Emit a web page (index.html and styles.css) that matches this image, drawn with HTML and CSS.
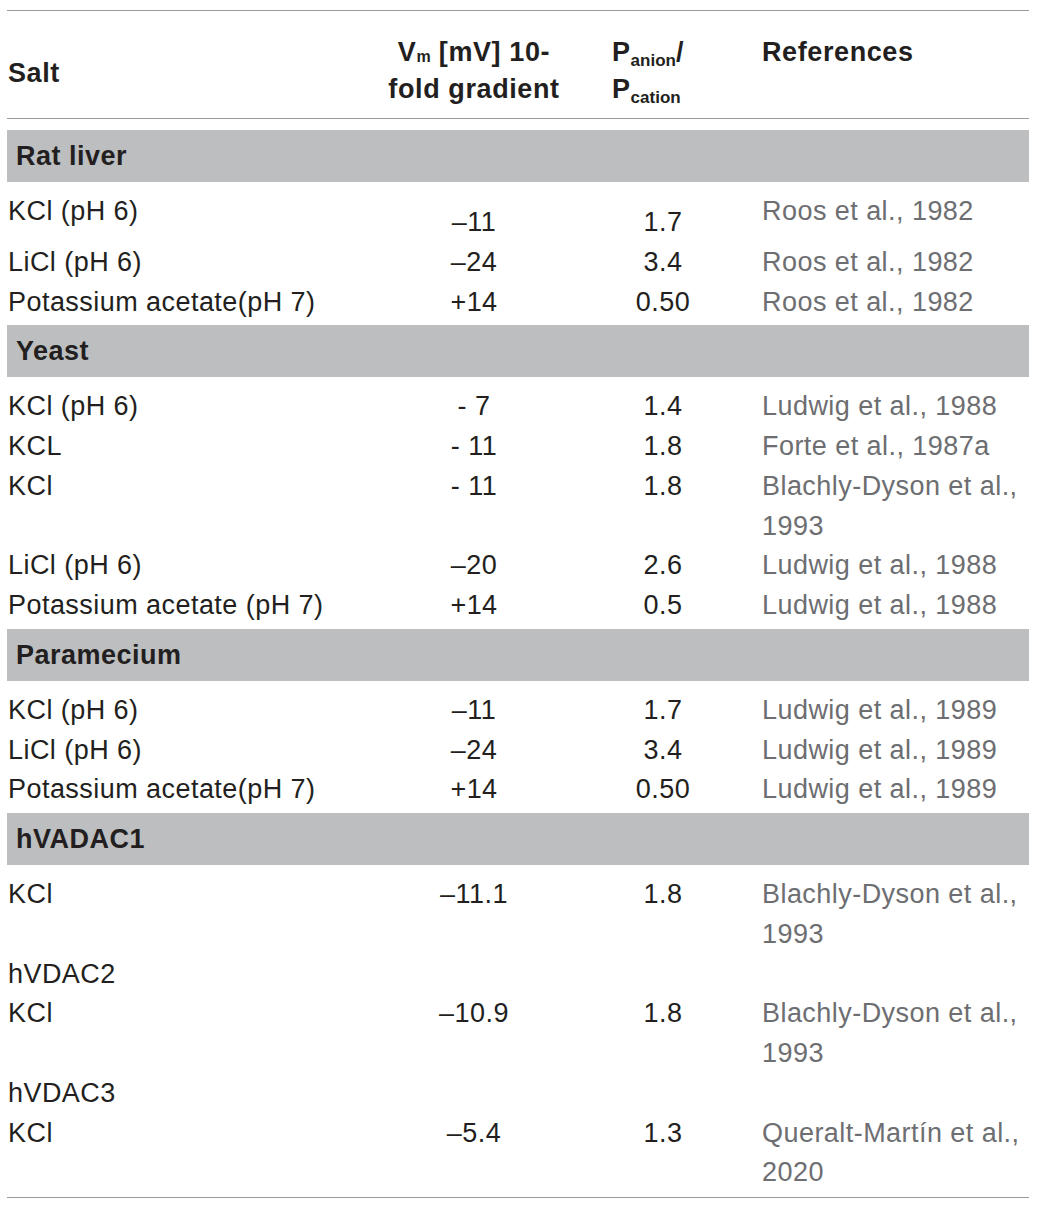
FILE: index.html
```html
<!DOCTYPE html>
<html lang="en">
<head>
<meta charset="utf-8">
<title>Salt permeability table</title>
<link rel="stylesheet" href="styles.css">
</head>
<body>
<table class="tbl">
  <colgroup>
    <col class="c1"><col class="c2"><col class="c3"><col class="c4">
  </colgroup>
  <thead>
    <tr>
      <th class="h-salt">Salt</th>
      <th class="h-vm">V<sub class="sb-m">m</sub> [mV] 10-<br>fold gradient</th>
      <th class="h-p">P<sub class="sb">anion</sub>/<br>P<sub class="sb">cation</sub></th>
      <th class="h-ref">References</th>
    </tr>
  </thead>
  <tbody>
    <tr class="sec first"><td colspan="4"><div class="bar">Rat liver</div></td></tr>
    <tr><td>KCl (pH 6)</td><td class="num low">–11</td><td class="num low">1.7</td><td class="ref">Roos et al., 1982</td></tr>
    <tr><td>LiCl (pH 6)</td><td class="num">–24</td><td class="num">3.4</td><td class="ref">Roos et al., 1982</td></tr>
    <tr><td>Potassium acetate(pH 7)</td><td class="num">+14</td><td class="num">0.50</td><td class="ref">Roos et al., 1982</td></tr>

    <tr class="sec"><td colspan="4"><div class="bar">Yeast</div></td></tr>
    <tr><td>KCl (pH 6)</td><td class="num">- 7</td><td class="num">1.4</td><td class="ref">Ludwig et al., 1988</td></tr>
    <tr><td>KCL</td><td class="num">- 11</td><td class="num">1.8</td><td class="ref">Forte et al., 1987a</td></tr>
    <tr><td>KCl</td><td class="num">- 11</td><td class="num">1.8</td><td class="ref">Blachly-Dyson et al.,<br>1993</td></tr>
    <tr><td>LiCl (pH 6)</td><td class="num">–20</td><td class="num">2.6</td><td class="ref">Ludwig et al., 1988</td></tr>
    <tr><td>Potassium acetate (pH 7)</td><td class="num">+14</td><td class="num">0.5</td><td class="ref">Ludwig et al., 1988</td></tr>

    <tr class="sec"><td colspan="4"><div class="bar">Paramecium</div></td></tr>
    <tr><td>KCl (pH 6)</td><td class="num">–11</td><td class="num">1.7</td><td class="ref">Ludwig et al., 1989</td></tr>
    <tr><td>LiCl (pH 6)</td><td class="num">–24</td><td class="num">3.4</td><td class="ref">Ludwig et al., 1989</td></tr>
    <tr><td>Potassium acetate(pH 7)</td><td class="num">+14</td><td class="num">0.50</td><td class="ref">Ludwig et al., 1989</td></tr>

    <tr class="sec"><td colspan="4"><div class="bar">hVADAC1</div></td></tr>
    <tr><td>KCl</td><td class="num">–11.1</td><td class="num">1.8</td><td class="ref">Blachly-Dyson et al.,<br>1993</td></tr>
    <tr><td>hVDAC2</td><td></td><td></td><td></td></tr>
    <tr><td>KCl</td><td class="num">–10.9</td><td class="num">1.8</td><td class="ref">Blachly-Dyson et al.,<br>1993</td></tr>
    <tr><td>hVDAC3</td><td></td><td></td><td></td></tr>
    <tr class="last"><td>KCl</td><td class="num">–5.4</td><td class="num">1.3</td><td class="ref">Queralt-Martín et al.,<br>2020</td></tr>
  </tbody>
</table>
</body>
</html>
```

FILE: styles.css
```css
html, body {
  margin: 0;
  padding: 0;
  background: #ffffff;
}

body {
  font-family: "Liberation Sans", Arial, "Helvetica Neue", sans-serif;
  color: #231f20;
}

.tbl {
  margin: 10px 0 0 7px;
  width: 1022px;
  border-collapse: collapse;
  table-layout: fixed;
  border-top: 1px solid #9a9a9a;
  border-bottom: 1px solid #9a9a9a;
}

.c1 { width: 371px; }
.c2 { width: 192px; }
.c3 { width: 186px; }
.c4 { width: 273px; }

thead tr {
  border-bottom: 1px solid #9a9a9a;
}

th {
  font-weight: bold;
  font-size: 27px;
  letter-spacing: 0.6px;
  line-height: 37px;
  padding: 23px 0 10px 0;
  vertical-align: top;
  text-align: left;
  color: #231f20;
}

.h-salt {
  vertical-align: middle;
  padding-left: 1px;
  padding-top: 27px;
}

.h-vm {
  text-align: center;
}

.h-p {
  padding-left: 42px;
}

.h-ref {
  padding-left: 6px;
}

.sb-m {
  font-size: 16px;
  line-height: 0;
  vertical-align: -1px;
  letter-spacing: 0;
}

.sb {
  font-size: 17px;
  line-height: 0;
  vertical-align: -5px;
  letter-spacing: 0;
}

td {
  font-size: 27px;
  letter-spacing: 0.45px;
  line-height: 39.75px;
  padding: 0;
  vertical-align: top;
  white-space: nowrap;
}

td:first-child {
  padding-left: 1px;
}

.num {
  text-align: center;
}

.low {
  padding-top: 11px;
}

.ref {
  padding-left: 6px;
  color: #6d6e71;
}

.sec td {
  padding: 3px 0 10px 0;
}

.sec.first td {
  padding-top: 11px;
}

.bar {
  height: 52px;
  line-height: 52px;
  background: #bcbec0;
  padding-left: 9px;
  font-weight: bold;
  letter-spacing: 0.5px;
}

.last td {
  padding-bottom: 4px;
}
```
